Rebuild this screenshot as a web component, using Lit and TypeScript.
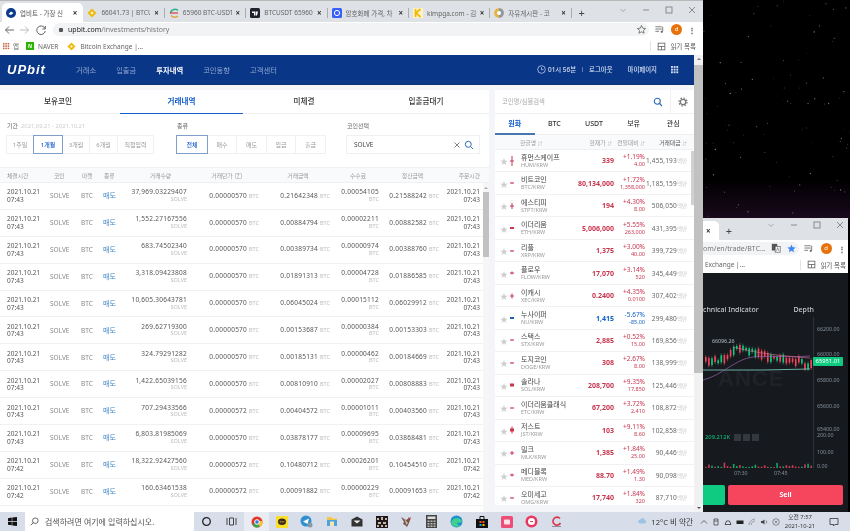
import { LitElement, css, html, svg } from 'lit';
import { customElement } from 'lit/decorators.js';

const TABS = [
  ['up', '업비트 - 가장 신'],
  ['bn', '66041.73 | BTCUS'],
  ['cc', '65960 BTC-USDT'],
  ['tv', 'BTCUSDT 65960.'],
  ['cm', '암호화폐 가격, 차'],
  ['km', 'kimpga.com - 김'],
  ['fr', '자유게시판 - 코'],
];

// amount, price, total, fee, settled, order time
const TRADES = [
  ['37,969.03229407', '0.00000570', '0.21642348', '0.00054105', '0.21588242', '07:43'],
  ['1,552.27167556', '0.00000570', '0.00884794', '0.00002211', '0.00882582', '07:43'],
  ['683.74502340', '0.00000570', '0.00389734', '0.00000974', '0.00388760', '07:43'],
  ['3,318.09423808', '0.00000570', '0.01891313', '0.00004728', '0.01886585', '07:43'],
  ['10,605.30643781', '0.00000570', '0.06045024', '0.00015112', '0.06029912', '07:43'],
  ['269.62719300', '0.00000570', '0.00153687', '0.00000384', '0.00153303', '07:43'],
  ['324.79291282', '0.00000570', '0.00185131', '0.00000462', '0.00184669', '07:43'],
  ['1,422.65039156', '0.00000570', '0.00810910', '0.00002027', '0.00808883', '07:43'],
  ['707.29433566', '0.00000572', '0.00404572', '0.00001011', '0.00403560', '07:43'],
  ['6,803.81985069', '0.00000570', '0.03878177', '0.00009695', '0.03868481', '07:43'],
  ['18,322.92427560', '0.00000572', '0.10480712', '0.00026201', '0.10454510', '07:42'],
  ['160.63461538', '0.00000572', '0.00091882', '0.00000229', '0.00091653', '07:42'],
];

// name, symbol, price, change, diff, volume, tail, body
const COINS: [string, string, string, string, string, string, number, number][] = [
  ['휴먼스케이프', 'HUM/KRW', '339', '+1.19%', '4.00', '1,455,193', 10, 1],
  ['비트코인', 'BTC/KRW', '80,134,000', '+1.72%', '1,358,000', '1,185,159', 1, 1],
  ['에스티피', 'STPT/KRW', '194', '+4.30%', '8.00', '506,050', 6, 1],
  ['이더리움', 'ETH/KRW', '5,006,000', '+5.55%', '263,000', '431,395', 2, 2],
  ['리플', 'XRP/KRW', '1,375', '+3.00%', '40.00', '399,729', 1, 1],
  ['플로우', 'FLOW/KRW', '17,070', '+3.14%', '520', '345,449', 3, 1],
  ['이캐시', 'XEC/KRW', '0.2400', '+4.35%', '0.0100', '307,402', 5, 1],
  ['누사이퍼', 'NU/KRW', '1,415', '-5.67%', '-85.00', '299,480', 2, 2],
  ['스택스', 'STX/KRW', '2,885', '+0.52%', '15.00', '169,856', 1, 1],
  ['도지코인', 'DOGE/KRW', '308', '+2.67%', '8.00', '138,999', 1, 1],
  ['솔라나', 'SOL/KRW', '208,700', '+9.35%', '17,850', '125,446', 2, 3],
  ['이더리움클래식', 'ETC/KRW', '67,200', '+3.72%', '2,410', '108,872', 1, 1],
  ['저스트', 'JST/KRW', '103', '+9.11%', '8.60', '102,858', 7, 3],
  ['밀크', 'MLK/KRW', '1,385', '+1.84%', '25.00', '90,446', 4, 1],
  ['메디블록', 'MED/KRW', '88.70', '+1.49%', '1.30', '90,098', 3, 1],
  ['오미세고', 'OMG/KRW', '17,740', '+1.84%', '320', '87,710', 1, 1],
];

function seeded(seed: number) {
  let s = seed;
  return () => {
    s = (s * 16807) % 2147483647;
    return s / 2147483647;
  };
}

const chromeGlyphs = {
  back: svg`<path d="M11 6H2.5M6 2.5 2.5 6 6 9.5" fill="none" stroke="currentColor" stroke-width="1"/>`,
  reload: svg`<path d="M10 4.5A4.3 4.3 0 1 0 10.3 7M10.3 2v3h-3" fill="none" stroke="currentColor" stroke-width="1"/>`,
  star: svg`<path d="M6 1.6 7.3 4.6l3.2.3-2.4 2.1.7 3.1L6 8.5l-2.8 1.6.7-3.1L1.5 4.9l3.2-.3Z" fill="none" stroke="currentColor" stroke-width=".9"/>`,
  starOn: svg`<path d="M6 1.6 7.3 4.6l3.2.3-2.4 2.1.7 3.1L6 8.5l-2.8 1.6.7-3.1L1.5 4.9l3.2-.3Z" fill="#4285f4"/>`,
  media: svg`<path d="M1.5 3h7M1.5 5.5h7M1.5 8h4" stroke="currentColor" stroke-width=".9" fill="none"/><path d="M9.5 3v5" stroke="currentColor" stroke-width=".9"/><circle cx="8.5" cy="8.5" r="1.2" fill="currentColor"/>`,
  reading: svg`<rect x="1.5" y="1.5" width="9" height="9" fill="none" stroke="currentColor"/><path d="M1.5 6h9M6 6v4.5" stroke="currentColor"/>`,
  translate: svg`<rect x="1" y="1" width="6.5" height="8" fill="#555"/><rect x="5" y="4" width="6" height="7" fill="#fff" stroke="#555" stroke-width=".8"/><path d="M6.5 9.5 8 5.5l1.500 4" fill="none" stroke="#555" stroke-width=".7"/>`,
};

function glyph(g: unknown, size = 12) {
  return html`<svg width=${size} height=${size} viewBox="0 0 12 12">${g}</svg>`;
}

function dotGrid(color: string, size: number) {
  const c = size / 3;
  return html`<svg width=${size} height=${size} viewBox="0 0 ${size} ${size}">
    ${[0, 1, 2].flatMap((x) =>
      [0, 1, 2].map(
        (y) =>
          svg`<rect x=${x * c} y=${y * c} width=${c - 0.8} height=${c - 0.8} fill=${color}/>`,
      ),
    )}
  </svg>`;
}

function favicon(kind: string) {
  switch (kind) {
    case 'up':
      return svg`<circle cx="5" cy="5" r="5" fill="#0b3a8c"/><path d="M2.5 6 5 3.5 7.5 5 5 7Z" fill="#fff"/>`;
    case 'bn':
      return svg`<path d="M5 .5 9.5 5 5 9.5.5 5Z" fill="#f0b90b"/><path d="M5 3.5 6.5 5 5 6.5 3.5 5Z" fill="#fff"/>`;
    case 'cc':
      return svg`<path d="M9 2.500C6 0 1.500 2 1.500 5.500" stroke="#2db38a" stroke-width="1.5" fill="none"/><path d="M1 5h8" stroke="#d94a4a" stroke-width="1.3"/><path d="M2 7.500c2 2 5 2 7 .5" stroke="#e0a03a" stroke-width="1.3" fill="none"/>`;
    case 'tv':
      return svg`<rect width="10" height="10" rx="1.5" fill="#1e222d"/><path d="M2 3.500h3.500v4H4V5H2ZM6 3.500h2l-1 4H6Z" fill="#fff"/>`;
    case 'cm':
      return svg`<rect width="10" height="10" rx="1.5" fill="#3861fb"/><circle cx="5" cy="5" r="2.6" fill="none" stroke="#fff"/>`;
    case 'km':
      return svg`<rect width="10" height="10" fill="#fff3c4"/><path d="M2.500 1v8M7.500 1 3 5l4.500 4" stroke="#f0b90b" stroke-width="1.8" fill="none"/>`;
    default:
      return svg`<circle cx="5" cy="5" r="4.8" fill="#e8b13a"/><path d="M5 .2A4.800 4.800 0 0 1 5 9.800Z" fill="#8c99a8"/><circle cx="5" cy="5" r="2" fill="#fff"/>`;
  }
}

function starfield() {
  const r = seeded(77);
  const dots = Array.from({ length: 90 }, () => {
    const x = 703 + r() * 147;
    const y = r() * 218;
    const o = 0.15 + r() * 0.45;
    return svg`<circle cx=${x} cy=${y} r=${0.35 + r() * 0.35} fill="#fff" opacity=${o}/>`;
  });
  return html`<svg class="stars" width="850" height="512">
    <defs>
      <linearGradient id="haze" x1="0" y1="0" x2="0" y2="1">
        <stop offset="0" stop-color="#000"/>
        <stop offset="1" stop-color="#1a0a1e"/>
      </linearGradient>
    </defs>
    <rect x="703" y="180" width="147" height="40" fill="url(#haze)"/>
    ${dots}
  </svg>`;
}

function candleChart() {
  const r = seeded(421);
  // y-centre path of the price across the visible part of the chart
  const knots = [
    [0, 22], [14, 21], [22, 20], [30, 12], [36, 8], [44, 12], [58, 15],
    [72, 19], [84, 23], [96, 22], [103, 27], [110, 22],
  ];
  const centre = (x: number) => {
    for (let i = 1; i < knots.length; i++) {
      if (x <= knots[i][0]) {
        const [x0, y0] = knots[i - 1];
        const [x1, y1] = knots[i];
        return y0 + ((x - x0) / (x1 - x0)) * (y1 - y0);
      }
    }
    return 24;
  };
  const candles = [];
  const vols = [];
  for (let x = 2; x < 108; x += 3.1) {
    const up = r() > 0.45;
    const h = 2 + r() * 7;
    const c = centre(x) + (r() - 0.5) * 4;
    const col = up ? '#0ecb81' : '#f6465d';
    candles.push(svg`
      <path d="M${x + 0.7} ${c - h / 2 - 2}V${c + h / 2 + 2}" stroke=${col} stroke-width=".5"/>
      <rect x=${x} y=${c - h / 2} width="1.6" height=${h} fill=${col}/>`);
    const v = 1 + r() * r() * 5;
    vols.push(svg`<rect x=${x} y=${129 - v} width="1.6" height=${v} fill=${col} opacity=".8"/>`);
  }
  return html`<svg class="candles" width="110" height="150" viewBox="0 0 110 150">
    ${candles}
    <path d="M0 31 60 31 107 30" stroke="#7fd6c8" stroke-width=".8" fill="none"/>
    <path d="M0 41C20 36 32 20 50 18S90 19 107 17" stroke="#9a5fb0" stroke-width=".7" fill="none"/>
    <path d="M30 8C45 12 65 16 107 19" stroke="#d86a8c" stroke-width=".6" fill="none"/>
    ${vols}
  </svg>`;
}

function taskIcon(i: number) {
  switch (i) {
    case 0:
      return html`<svg width="11" height="11" viewBox="0 0 11 11"><circle cx="5.5" cy="5.5" r="3.8" fill="none" stroke="#222" stroke-width="1.3"/></svg>`;
    case 1:
      return html`<svg width="11" height="11" viewBox="0 0 11 11"><path d="M1 2v7M10 2v7M3.500 2h4v7h-4Z" fill="none" stroke="#333" stroke-width=".9"/></svg>`;
    case 2:
      return html`<svg width="12" height="12" viewBox="0 0 12 12"><circle cx="6" cy="6" r="5.5" fill="#e0392b"/><path d="M6 6 1.300 8.800A5.500 5.500 0 0 0 8.800 10.700Z" fill="#2fa84f"/><path d="M6 6l2.800 4.700A5.500 5.500 0 0 0 11.400 5H6Z" fill="#f7c325"/><circle cx="6" cy="6" r="2.3" fill="#2f7de1" stroke="#fff"/></svg>`;
    case 3:
      return html`<svg width="12" height="12" viewBox="0 0 12 12"><rect width="12" height="12" fill="#f9df2b"/><ellipse cx="6" cy="5.8" rx="4" ry="3.3" fill="#3c2a1e"/><path d="M3.800 5.800h4.400" stroke="#f9df2b" stroke-dasharray="1 .8"/></svg>`;
    case 4:
      return html`<svg width="13" height="13" viewBox="0 0 13 13"><circle cx="6" cy="6" r="5.5" fill="#2f8fd0"/><path d="M3 6.500 9 3.500 7.500 9Z" fill="#fff"/><circle cx="10" cy="10" r="2.5" fill="#8a97a6"/></svg>`;
    case 5:
      return html`<svg width="12" height="11" viewBox="0 0 12 11"><path d="M1 1h4l1 1.500h5V4H1Z" fill="#f5c542"/><path d="M1 4h10v6H1Z" fill="#4aa3df"/><path d="M4 5.500h4V10H4Z" fill="#f5e6a8"/></svg>`;
    case 6:
      return html`<svg width="12" height="11" viewBox="0 0 12 11"><path d="M.5 3.500 6 .5l5.500 3v7H.5Z" fill="#333"/><path d="M2.500 4.500h7L6 7.500Z" fill="#eee"/></svg>`;
    case 7:
      return html`<svg width="12" height="12" viewBox="0 0 12 12"><rect width="12" height="12" fill="#1d1a1d"/><path d="M1 2h2v2H1ZM5 1h2v3H5ZM9 2h2v2H9ZM2 6h3v2H2ZM7 6h3v2H7ZM1 9h2v2H1ZM5 9h2v2H5ZM9 9h2v2H9Z" fill="#c9b5a2"/></svg>`;
    case 8:
      return html`<svg width="13" height="13" viewBox="0 0 13 13"><path d="M1 2 6 5l5-3-2 6-2 4-2-2-2-1 1-2Z" fill="#7a5148"/><path d="M4 3.500 8 8 6.500 10Z" fill="#b9c7b0"/><path d="M8.500 2.500 10 5" stroke="#b33" /></svg>`;
    case 9:
      return html`<svg width="11" height="13" viewBox="0 0 11 13"><rect width="11" height="13" fill="#444"/><rect x="1.5" y="1.5" width="8" height="2.5" fill="#ddd"/><path d="M1.500 5.500h2v1.500h-2ZM4.500 5.500h2v1.500h-2ZM7.500 5.500h2v1.500h-2ZM1.500 8h2v1.500h-2ZM4.500 8h2v1.500h-2ZM7.500 8h2v1.500h-2ZM1.500 10.500h2v1.500h-2ZM4.500 10.500h2v1.500h-2ZM7.500 10.500h2v1.500h-2Z" fill="#bbb"/></svg>`;
    case 10:
      return html`<svg width="13" height="13" viewBox="0 0 13 13"><circle cx="6.5" cy="6.5" r="6" fill="#1b8fd3"/><path d="M1 8c1-5 8-7 11-2 0 2-3 2-5 1.500 0 2 2 3.500 4 2.700-2 2.500-8 2.500-10-2.200Z" fill="#3ed08c"/></svg>`;
    case 11:
      return html`<svg width="12" height="13" viewBox="0 0 12 13"><path d="M0 4h12v9H0Z" fill="#111"/><path d="M4 4V1.500h4V4" fill="none" stroke="#111"/><path d="M3.500 6h2v2h-2ZM6.500 6h2v2h-2Z" fill="#f25022"/><path d="M3.500 9h2v2h-2Z" fill="#00a4ef"/><path d="M6.500 9h2v2h-2Z" fill="#ffb900"/></svg>`;
    case 12:
      return html`<svg width="12" height="12" viewBox="0 0 12 12"><rect width="12" height="12" rx="1.5" fill="#ee4d77"/><rect x="3" y="3.5" width="6" height="5" rx="1" fill="#ffe3ea"/></svg>`;
    case 13:
      return html`<svg width="13" height="13" viewBox="0 0 13 13"><circle cx="6.5" cy="6.5" r="6" fill="#e8365d"/><circle cx="6.5" cy="6.5" r="3.5" fill="#fff"/><path d="M5 6.500h3" stroke="#e8365d"/></svg>`;
    default:
      return html`<svg width="13" height="13" viewBox="0 0 13 13"><path d="M10 3.500A4 4 0 1 0 10.500 8" fill="none" stroke="#d8344b" stroke-width="1.6"/><path d="M2 11.500h9" stroke="#8a8f99"/></svg>`;
  }
}

@customElement('app-root')
export class AppRoot extends LitElement {
  static override styles = css`
    :host {
      display: block;
      width: 850px;
      height: 531px;
      overflow: hidden;
      background: #000;
      color: #333;
      font-family: 'Noto Sans', 'Noto Sans CJK KR', sans-serif;
      font-size: 7px;
      filter: blur(0.3px);
    }
    * {
      box-sizing: border-box;
    }
    svg {
      display: block;
      flex: none;
    }
    .desktop {
      position: relative;
      height: 512px;
      overflow: hidden;
    }
    .stars {
      position: absolute;
      left: 0;
      top: 0;
    }
    /* desktop windows */
    .win-main {
      position: absolute;
      left: 0;
      top: 0;
      width: 703px;
      height: 512px;
      display: flex;
      flex-direction: column;
      background: #fff;
    }
    .win-chart {
      position: absolute;
      left: 703px;
      top: 218px;
      width: 145px;
      height: 294px;
      display: flex;
      flex-direction: column;
      background: #161a1e;
    }
    /* browser chrome */
    .tabbar {
      height: 22px;
      flex: none;
      display: flex;
      align-items: flex-end;
      padding: 2px 0 0 2px;
      background: #dee1e6;
      border-top: 1px solid #b9b9b9;
    }
    .tab {
      width: 81.4px;
      height: 19px;
      flex: none;
      display: flex;
      align-items: center;
      gap: 4px;
      padding: 0 6px 0 4px;
      color: #666;
      font-size: 6.5px;
      position: relative;
    }
    .tab.active {
      background: #fff;
      border-radius: 5px 5px 0 0;
      color: #555;
    }
    .tab:not(.active)::after {
      content: '';
      position: absolute;
      right: 0;
      top: 5px;
      height: 10px;
      width: 1px;
      background: #a9acb0;
    }
    .tab-title {
      flex: 1;
      min-width: 0;
      white-space: nowrap;
      overflow: hidden;
    }
    .tab-x {
      flex: none;
      font-size: 8px;
      line-height: 1;
      color: #333;
      font-weight: 700;
    }
    .newtab {
      width: 20px;
      height: 18px;
      text-align: center;
      font-size: 11px;
      line-height: 18px;
      color: #444;
      flex: none;
    }
    .winbtns {
      margin-left: auto;
      align-self: flex-start;
      display: flex;
      align-items: center;
      height: 14px;
      color: #777;
    }
    .win-chart .winbtns {
      margin-right: -3px;
    }
    .winbtns span {
      width: 23px;
      display: flex;
      justify-content: center;
    }
    .toolbar {
      height: 15px;
      flex: none;
      display: flex;
      align-items: center;
      background: #fff;
      padding: 0 5px 0 1px;
      color: #666;
    }
    .tool {
      width: 16px;
      display: flex;
      justify-content: center;
      flex: none;
      color: #666;
    }
    .tool.off {
      color: #bbb;
    }
    .flip {
      transform: scaleX(-1);
    }
    .addr {
      flex: 1;
      height: 13px;
      margin: 0 2px 0 4px;
      border-radius: 7px;
      background: #f1f3f4;
      display: flex;
      align-items: center;
      padding: 0 0 0 6px;
      gap: 5px;
      font-size: 7px;
      color: #777;
      white-space: nowrap;
    }
    .addr b {
      font-weight: 400;
      color: #222;
    }
    .lock {
      width: 4px;
      height: 4px;
      background: #555;
      border-radius: 1px;
      flex: none;
    }
    .addr .tool:last-child {
      margin-left: auto;
    }
    .avatar {
      width: 11px;
      height: 11px;
      border-radius: 50%;
      background: #e8710a;
      color: #fff;
      font-size: 6px;
      line-height: 11px;
      text-align: center;
      margin: 0 4px;
      flex: none;
    }
    .kebab {
      width: 12px;
      text-align: center;
      color: #555;
      font-size: 8px;
      font-weight: 700;
      flex: none;
    }
    .bookmarks {
      height: 18px;
      flex: none;
      display: flex;
      align-items: center;
      padding: 0 7px 0 3px;
      background: #fff;
      font-size: 6.5px;
      color: #666;
      white-space: nowrap;
    }
    .bm-apps {
      margin-right: 7px;
      display: flex;
      gap: 3px;
      align-items: center;
    }
    .bm {
      display: flex;
      gap: 4px;
      align-items: center;
      margin-right: 9px;
    }
    .naver {
      width: 8px;
      height: 8px;
      background: #2db400;
      color: #fff;
      font-size: 5px;
      line-height: 8px;
      text-align: center;
      font-weight: 700;
    }
    .reading {
      margin-left: auto;
      display: flex;
      align-items: center;
      gap: 4px;
      padding-left: 6px;
      border-left: 1px solid #e4e4e4;
      color: #555;
    }
    /* page */
    .viewport {
      flex: 1;
      min-height: 0;
      display: flex;
    }
    .page {
      width: 694px;
      display: flex;
      flex-direction: column;
      background: #f4f5f8;
    }
    .pagebar {
      width: 9px;
      background: #f1f1f1;
      position: relative;
      display: flex;
      flex-direction: column;
      align-items: center;
      padding-top: 10px;
    }
    .pagebar .thumb {
      width: 100%;
      height: 308px;
      background: #c1c1c1;
    }
    .pagebar i {
      position: absolute;
      left: 3px;
      border: 2px solid transparent;
    }
    .pagebar .up {
      top: 1px;
      border-bottom-color: #777;
    }
    .pagebar .down {
      bottom: 1px;
      border-top-color: #505050;
    }
    .nav {
      height: 30px;
      flex: none;
      background: #093687;
      border-bottom: 1px solid #0a2f72;
      display: flex;
      align-items: center;
      padding: 0 15px 0 7px;
      color: #8fa6cf;
      font-size: 7.3px;
      white-space: nowrap;
    }
    .logo {
      width: 69px;
      color: #fff;
      font-family: 'Liberation Sans', sans-serif;
      font-size: 13px;
      font-weight: 700;
      font-style: italic;
      letter-spacing: 1px;
    }
    .nav-item {
      margin-right: 20px;
    }
    .nav-item.on {
      color: #fff;
      font-weight: 700;
    }
    .nav-right {
      margin-left: auto;
      display: flex;
      align-items: center;
      color: #d6e0f2;
      font-size: 6.4px;
      font-weight: 500;
    }
    .nav-right .clock {
      margin-right: 2px;
    }
    .nav-right .sep {
      width: 1px;
      height: 5px;
      background: #5d79ae;
      margin: 0 6px;
    }
    .nav-right .mypage {
      margin: 0 14px 0 15px;
    }
    .content {
      flex: 1;
      min-height: 0;
      display: flex;
      gap: 6px;
      padding-top: 5px;
    }
    .left {
      width: 489px;
      background: #fff;
      display: flex;
      flex-direction: column;
    }
    .main-tabs {
      display: grid;
      grid-template-columns: 120px 123px 122px 122px;
      height: 24px;
      flex: none;
      border-bottom: 1px solid #eef0f3;
    }
    .main-tabs div {
      text-align: center;
      line-height: 23px;
      font-size: 7.6px;
      font-weight: 500;
      color: #333;
    }
    .main-tabs div:first-child {
      padding-right: 4px;
    }
    .main-tabs .on {
      color: #115dcb;
      font-weight: 700;
      border-bottom: 1px solid #115dcb;
      height: 24px;
    }
    .filters {
      height: 53px;
      flex: none;
      display: flex;
      padding: 8px 9px 0 6px;
    }
    .filter-label {
      font-size: 6px;
      line-height: 8px;
      color: #666;
      margin-bottom: 5px;
      padding-left: 1px;
    }
    .filter-label span {
      color: #ccc;
      margin-left: 3px;
      font-size: 5.8px;
    }
    .seg {
      display: flex;
      height: 19px;
    }
    .seg div {
      display: flex;
      align-items: center;
      justify-content: center;
      font-size: 6px;
      color: #999;
      border: 1px solid #eef0f3;
      margin-left: -1px;
    }
    .seg div:first-child {
      margin-left: 0;
    }
    .seg .on {
      color: #115dcb;
      font-weight: 500;
      border-color: #7d9fc9;
      position: relative;
    }
    .period {
      width: 170px;
    }
    .kind {
      width: 170px;
    }
    .coin-pick {
      flex: 1;
    }
    .coin-input {
      height: 19px;
      border: 1px solid #eef0f3;
      display: flex;
      align-items: center;
      padding: 0 5px 0 7px;
      font-size: 6.5px;
      color: #444;
    }
    .coin-input svg:first-of-type {
      margin-left: auto;
      margin-right: 3px;
    }
    .table {
      flex: 1;
      min-height: 0;
      position: relative;
    }
    .thead,
    .trow {
      display: grid;
      grid-template-columns: 43px 31px 22px 24px 60px 72px 71px 49px 60px 41px;
      padding: 0 9px 0 7px;
      width: 489px;
    }
    .thead {
      height: 16px;
      align-items: center;
      background: #f9fafc;
      border-top: 1px solid #eef0f3;
      border-bottom: 1px solid #eef0f3;
      font-size: 5.8px;
      color: #999;
    }
    .thead .ctr {
      text-align: center;
      padding-left: 7px;
    }
    .thead .pl4 {
      padding-left: 4px;
    }
    .thead .pl1 {
      padding-left: 1px;
    }
    .thead .help {
      display: inline-block;
      margin-left: 2px;
      width: 7px;
      height: 6px;
      line-height: 5px;
      border: 1px solid #ccc;
      border-radius: 1px;
      text-align: center;
      font-size: 5px;
      font-style: normal;
    }
    .trow {
      height: 26.9px;
      align-items: center;
      border-bottom: 1px solid #f1f1f4;
      font-size: 6.5px;
      line-height: 7.5px;
      color: #555;
      white-space: nowrap;
    }
    .r {
      text-align: right;
    }
    .num {
      letter-spacing: 0.25px;
    }
    .unit {
      color: #bbb;
      font-size: 5.5px;
      letter-spacing: 0;
    }
    .sub {
      display: block;
      color: #bbb;
      font-size: 5.5px;
      letter-spacing: 0;
    }
    .soft {
      color: #888;
    }
    .sell {
      color: #3f87c5;
      font-size: 7px;
    }
    .tbar {
      position: absolute;
      right: 0;
      top: 16px;
      width: 6px;
      bottom: 0;
      background: #f6f6f6;
    }
    .tbar .thumb {
      margin-top: 9px;
      height: 65px;
      background: #c1c1c1;
    }
    .tbar i {
      position: absolute;
      top: 2px;
      left: 1px;
      border: 2px solid transparent;
      border-bottom-color: #aaa;
    }
    /* market panel */
    .market {
      width: 199px;
      height: 415px;
      background: #fff;
      display: flex;
      flex-direction: column;
      position: relative;
      overflow: hidden;
    }
    .msearch {
      height: 24px;
      flex: none;
      display: flex;
      align-items: center;
      padding: 0 6px 0 7px;
      border-bottom: 1px solid #eef0f3;
      color: #aaa;
      font-size: 6.3px;
    }
    .msearch svg:first-of-type {
      margin-left: auto;
      margin-right: 7px;
    }
    .msearch .div {
      width: 1px;
      height: 100%;
      background: #eef0f3;
      margin-right: 7px;
    }
    .mtabs {
      height: 21px;
      flex: none;
      display: grid;
      grid-template-columns: repeat(5, 39.6px);
      border-bottom: 1px solid #eef0f3;
    }
    .mtabs div {
      text-align: center;
      line-height: 20px;
      font-size: 7px;
      font-weight: 500;
      color: #333;
    }
    .mtabs .on {
      color: #115dcb;
      font-weight: 700;
      border-bottom: 2px solid #4a76ab;
      height: 21px;
    }
    .mhead,
    .mrow {
      display: grid;
      grid-template-columns: 26px 93px 31px 42px;
    }
    .mhead {
      height: 15px;
      flex: none;
      align-items: center;
      background: #f9fafc;
      border-bottom: 1px solid #eef0f3;
      font-size: 5.8px;
      color: #999;
    }
    .mhead .h1 {
      padding-left: 25px;
      grid-column: 1 / span 2;
      display: flex;
      justify-content: space-between;
      padding-right: 2px;
    }
    .mhead .h3 {
      text-align: right;
      white-space: nowrap;
    }
    .mhead b {
      font-weight: 400;
      color: #bbb;
      font-size: 5px;
    }
    .mhead .dark {
      color: #555;
    }
    .mrow {
      height: 22.47px;
      flex: none;
      align-items: center;
      border-bottom: 1px solid #f1f1f4;
      white-space: nowrap;
    }
    .mark {
      display: flex;
      align-items: center;
      padding-left: 5px;
      gap: 2px;
      color: #ccc;
      font-size: 8px;
    }
    .tick {
      width: 4px;
      height: 12px;
      position: relative;
      flex: none;
    }
    .tick i,
    .tick b {
      position: absolute;
      left: 50%;
      top: 50%;
      transform: translate(-50%, -50%);
      background: currentColor;
    }
    .tick i {
      width: 1px;
    }
    .tick b {
      width: 4px;
    }
    .mname {
      display: flex;
      justify-content: space-between;
      align-items: center;
      min-width: 0;
    }
    .mname .ko {
      display: block;
      font-size: 7px;
      line-height: 9px;
      color: #444;
    }
    .mname .sym {
      display: block;
      font-size: 5.5px;
      line-height: 7px;
      color: #999;
    }
    .price {
      font-size: 7px;
      font-weight: 700;
      text-align: right;
    }
    .rise {
      color: #c8364e;
    }
    .fall {
      color: #1261c4;
    }
    .change {
      text-align: right;
      font-size: 6.5px;
      line-height: 8px;
    }
    .change span {
      display: block;
      font-size: 5.5px;
      line-height: 7px;
    }
    .vol {
      text-align: right;
      font-size: 6.5px;
      color: #666;
      letter-spacing: 0.15px;
      margin-left: -6px;
    }
    .vol span {
      color: #ccc;
      font-size: 5.5px;
      letter-spacing: 0;
    }
    .mbar {
      position: absolute;
      right: 0;
      top: 61px;
      width: 3px;
      height: 54px;
      background: #d0d0d0;
    }
    /* chart window */
    .win-chart .tabbar {
      padding: 0;
      border-top: 0;
    }
    .win-chart .tab {
      width: 16px;
      background: #fff;
      padding: 0 0 0 3px;
      border-radius: 0 5px 0 0;
    }
    .win-chart .tab::after {
      display: none;
    }
    .win-chart .addr {
      margin-left: 0;
      padding-left: 0;
      border-radius: 0 7px 7px 0;
      justify-content: space-between;
      padding-right: 2px;
    }
    .chart-tools {
      display: flex;
      gap: 5px;
    }
    .win-chart .toolbar {
      height: 16px;
      padding: 0 2px 0 0;
    }
    .win-chart .bookmarks {
      height: 17px;
      padding: 0 2px 0 2px;
    }
    .trade {
      flex: 1;
      min-height: 0;
      position: relative;
      color: #d8dade;
    }
    .trade-tabs {
      display: flex;
      justify-content: space-between;
      padding: 32px 34px 0 0;
      font-size: 7px;
      font-weight: 500;
      color: #c7c9cd;
      white-space: nowrap;
    }
    .candles {
      position: absolute;
      left: 0;
      top: 66px;
    }
    .watermark {
      position: absolute;
      left: 15px;
      top: 93px;
      font-family: 'Liberation Sans', sans-serif;
      font-size: 22px;
      font-weight: 700;
      letter-spacing: 1px;
      color: #1f2328;
    }
    .axis {
      position: absolute;
      left: 110px;
      top: 44px;
      bottom: 44px;
      width: 1px;
      background: #2b3139;
    }
    .tick-label {
      position: absolute;
      left: 114px;
      font-size: 5.3px;
      line-height: 5px;
      color: #848e9c;
    }
    .time-a {
      left: 31px;
      top: 198px;
    }
    .time-b {
      left: 71px;
      top: 198px;
    }
    .badge {
      position: absolute;
      left: 110px;
      top: 84px;
      width: 30px;
      height: 9px;
      background: #0ecb81;
      color: #fff;
      font-size: 5.8px;
      line-height: 9px;
      text-align: center;
      border-radius: 1px;
    }
    .hi {
      position: absolute;
      left: 9px;
      top: 64px;
      font-size: 5.3px;
      color: #b7bdc6;
    }
    .volrow {
      position: absolute;
      left: 2px;
      top: 160px;
      display: flex;
      align-items: center;
      gap: 2px;
      font-size: 5.8px;
      color: #0ecb81;
    }
    .volrow i {
      width: 7px;
      height: 7px;
      background: #33383f;
    }
    .volrow i:first-of-type {
      margin-left: 2px;
    }
    .actions {
      position: absolute;
      left: 0;
      right: 5px;
      top: 212px;
      height: 20px;
      display: flex;
      gap: 3px;
    }
    .buy {
      width: 22px;
      background: #0ecb81;
      border-radius: 0 2px 2px 0;
    }
    .sellbtn {
      flex: 1;
      background: #f6465d;
      border-radius: 2px;
      color: #fff;
      font-size: 7px;
      font-weight: 700;
      line-height: 20px;
      text-align: center;
    }
    /* taskbar */
    .taskbar {
      height: 19px;
      background: #d8dee9;
      display: flex;
      align-items: stretch;
      font-size: 7px;
      color: #333;
    }
    .start {
      width: 25px;
      display: flex;
      align-items: center;
      justify-content: center;
    }
    .task-search {
      width: 169px;
      background: #fff;
      display: flex;
      align-items: center;
      gap: 6px;
      padding-left: 5px;
      font-size: 8px;
      color: #555;
      white-space: nowrap;
    }
    .slot {
      width: 25px;
      display: flex;
      align-items: center;
      justify-content: center;
    }
    .slot.on {
      background: #e9edf3;
    }
    .tray {
      margin-left: auto;
      display: flex;
      align-items: center;
      color: #333;
      white-space: nowrap;
    }
    .weather {
      display: flex;
      align-items: center;
      gap: 4px;
      margin-right: 7px;
      font-size: 7.6px;
    }
    .tray-icons {
      display: flex;
      gap: 4px;
      color: #444;
      margin-right: 3px;
    }
    .clock-t {
      width: 34px;
      text-align: center;
      font-size: 5.8px;
      line-height: 9px;
    }
    .notify {
      width: 33px;
      display: flex;
      justify-content: center;
    }
  `;

  private renderTabs() {
    return html`<div class="tabbar">
      ${TABS.map(
        ([kind, title], i) => html`<div class="tab ${i === 0 ? 'active' : ''}">
          <svg width="10" height="10" viewBox="0 0 10 10">${favicon(kind)}</svg>
          <span class="tab-title">${title}</span>
          <span class="tab-x">×</span>
        </div>`,
      )}
      <div class="newtab">+</div>
      ${this.renderWinButtons()}
    </div>`;
  }

  private renderWinButtons() {
    return html`<div class="winbtns">
      <span
        ><svg width="8" height="8" viewBox="0 0 8 8"><path d="M1.500 3 4 5.500 6.500 3" fill="none" stroke="#999" stroke-width=".8"/></svg></span
      >
      <span
        ><svg width="8" height="8" viewBox="0 0 8 8"><path d="M1 4h6" stroke="#777" stroke-width=".8"/></svg></span
      >
      <span
        ><svg width="8" height="8" viewBox="0 0 8 8"><rect x="1" y="1" width="6" height="6" fill="none" stroke="#777" stroke-width=".8"/></svg></span
      >
      <span
        ><svg width="8" height="8" viewBox="0 0 8 8"><path d="M1 1l6 6M7 1 1 7" stroke="#777" stroke-width=".8"/></svg></span
      >
    </div>`;
  }

  private renderMain() {
    return html`<div class="win-main">
      ${this.renderTabs()}
      <div class="toolbar">
        <span class="tool">${glyph(chromeGlyphs.back)}</span>
        <span class="tool off flip">${glyph(chromeGlyphs.back)}</span>
        <span class="tool">${glyph(chromeGlyphs.reload)}</span>
        <div class="addr">
          <span class="lock"></span>
          <span><b>upbit.com</b>/investments/history</span>
          <span class="tool">${glyph(chromeGlyphs.star, 11)}</span>
        </div>
        <span class="tool">${glyph(chromeGlyphs.media, 11)}</span>
        <span class="avatar">d</span>
        <span class="kebab">⋮</span>
      </div>
      <div class="bookmarks">
        <span class="bm-apps">${dotGrid('#c9663b', 7)} 앱</span>
        <span class="bm"><span class="naver">N</span> NAVER</span>
        <span class="bm">
          <svg width="9" height="9" viewBox="0 0 10 10">${favicon('bn')}</svg>
          Bitcoin Exchange |...
        </span>
        <span class="reading">${glyph(chromeGlyphs.reading, 9)} 읽기 목록</span>
      </div>
      <div class="viewport">
        <div class="page">
          <div class="nav">
            <div class="logo">UPbit</div>
            <span class="nav-item">거래소</span>
            <span class="nav-item">입출금</span>
            <span class="nav-item on">투자내역</span>
            <span class="nav-item">코인동향</span>
            <span class="nav-item">고객센터</span>
            <div class="nav-right">
              <svg class="clock" width="9" height="9" viewBox="0 0 9 9"><circle cx="4.5" cy="4.5" r="3.8" fill="none" stroke="#d6e0f2" stroke-width=".7"/><path d="M4.500 2.300v2.300H6.500" fill="none" stroke="#d6e0f2" stroke-width=".7"/></svg>
              <span>01시 56분</span><span class="sep"></span><span>로그아웃</span>
              <span class="mypage">마이페이지</span>
              ${dotGrid('#d6e0f2', 8)}
            </div>
          </div>
          <div class="content">
            ${this.renderHistory()} ${this.renderMarket()}
          </div>
        </div>
        <div class="pagebar">
          <i class="up"></i>
          <div class="thumb"></div>
          <i class="down"></i>
        </div>
      </div>
    </div>`;
  }

  private renderHistory() {
    const seg = (items: [string, number][], on: string) =>
      html`<div class="seg">
        ${items.map(
          ([t, w]) =>
            html`<div class=${t === on ? 'on' : ''} style="width:${w}px">${t}</div>`,
        )}
      </div>`;
    return html`<section class="left">
      <div class="main-tabs">
        <div>보유코인</div>
        <div class="on">거래내역</div>
        <div>미체결</div>
        <div>입출금대기</div>
      </div>
      <div class="filters">
        <div class="period">
          <div class="filter-label">기간<span>2021.09.21 - 2021.10.21</span></div>
          ${seg(
            [
              ['1주일', 28],
              ['1개월', 30],
              ['3개월', 28],
              ['6개월', 29],
              ['직접입력', 37],
            ],
            '1개월',
          )}
        </div>
        <div class="kind">
          <div class="filter-label">종류</div>
          ${seg(
            [
              ['전체', 32],
              ['매수', 30],
              ['매도', 31],
              ['입금', 30],
              ['출금', 31],
            ],
            '전체',
          )}
        </div>
        <div class="coin-pick">
          <div class="filter-label">코인선택</div>
          <div class="coin-input">
            SOLVE
            <svg width="8" height="8" viewBox="0 0 8 8"><path d="M1.500 1.500l5 5M6.500 1.500l-5 5" stroke="#777" stroke-width=".9"/></svg>
            <svg width="10" height="10" viewBox="0 0 10 10"><circle cx="4.3" cy="4.3" r="3" fill="none" stroke="#2e6cb8" stroke-width="1"/><path d="M6.500 6.500 9 9" stroke="#2e6cb8" stroke-width="1"/></svg>
          </div>
        </div>
      </div>
      <div class="table">
        <div class="thead">
          <span>체결시간</span>
          <span class="pl4">코인</span>
          <span class="pl1">마켓</span>
          <span class="pl1">종류</span>
          <span class="ctr">거래수량</span>
          <span class="ctr">거래단가<i class="help">?</i></span>
          <span class="ctr">거래금액</span>
          <span class="ctr">수수료</span>
          <span class="ctr">정산금액</span>
          <span class="r">주문시간</span>
        </div>
        ${TRADES.map(
          ([amount, price, total, fee, settled, time]) => html`<div class="trow">
            <span>2021.10.21<br />${time}</span>
            <span class="soft">SOLVE</span>
            <span class="soft">BTC</span>
            <span class="sell">매도</span>
            <span class="r num">${amount}<span class="sub">SOLVE</span></span>
            <span class="r num">${price} <span class="unit">BTC</span></span>
            <span class="r num">${total} <span class="unit">BTC</span></span>
            <span class="r num">${fee}<span class="sub">BTC</span></span>
            <span class="r num">${settled} <span class="unit">BTC</span></span>
            <span class="r">2021.10.21<br />${time}</span>
          </div>`,
        )}
        <div class="tbar"><i></i><div class="thumb"></div></div>
      </div>
    </section>`;
  }

  private renderMarket() {
    return html`<section class="market">
      <div class="msearch">
        코인명/심볼검색
        <svg width="10" height="10" viewBox="0 0 10 10"><circle cx="4.3" cy="4.3" r="3" fill="none" stroke="#2e6cb8" stroke-width="1.1"/><path d="M6.500 6.500 9 9" stroke="#2e6cb8" stroke-width="1.1"/></svg>
        <span class="div"></span>
        <svg width="10" height="10" viewBox="0 0 10 10"><circle cx="5" cy="5" r="2.7" fill="none" stroke="#777" stroke-width="1.3"/><circle cx="5" cy="5" r="4" fill="none" stroke="#777" stroke-width="1.2" stroke-dasharray="1.5 1.64"/></svg>
      </div>
      <div class="mtabs">
        <div class="on">원화</div>
        <div>BTC</div>
        <div>USDT</div>
        <div>보유</div>
        <div>관심</div>
      </div>
      <div class="mhead">
        <span class="h1"><span>한글명 <b>⇵</b></span><span>현재가 <b>⇵</b></span></span>
        <span class="h3">전일대비 <b>⇵</b></span>
        <span class="h3 dark">거래대금 <b>⇵</b></span>
      </div>
      ${COINS.map(([name, sym, price, pct, diff, vol, tail, body]) => {
        const tone = pct.startsWith('-') ? 'fall' : 'rise';
        return html`<div class="mrow">
          <div class="mark">
            <span>★</span>
            <span class="tick ${tone}">
              <i style="height:${tail}px"></i>
              <b style="height:${body}px"></b>
            </span>
          </div>
          <div class="mname">
            <span><span class="ko">${name}</span><span class="sym">${sym}</span></span>
            <span class="price ${tone}">${price}</span>
          </div>
          <div class="change ${tone}">${pct}<span>${diff}</span></div>
          <div class="vol">${vol}<span>백만</span></div>
        </div>`;
      })}
      <div class="mbar"></div>
    </section>`;
  }

  private renderChartWindow() {
    const labels: [string, number][] = [
      ['66200.00', 54],
      ['66000.00', 79],
      ['65800.00', 105],
      ['65600.00', 131],
      ['65400.00', 154],
      ['200.00', 160],
      ['100.00', 177],
      ['0.00', 191],
    ];
    return html`<div class="win-chart">
      <div class="tabbar">
        <div class="tab"><span class="tab-x">×</span></div>
        <div class="newtab">+</div>
        ${this.renderWinButtons()}
      </div>
      <div class="toolbar">
        <div class="addr">
          <span>om/en/trade/BTC...</span>
          <span class="chart-tools">
            ${glyph(chromeGlyphs.translate, 10)} ${glyph(chromeGlyphs.starOn, 11)}
          </span>
        </div>
        <span class="tool">${glyph(chromeGlyphs.media, 11)}</span>
        <span class="avatar">d</span>
        <span class="kebab">⋮</span>
      </div>
      <div class="bookmarks">
        Exchange |...
        <span class="reading">${glyph(chromeGlyphs.reading, 9)} 읽기 목록</span>
      </div>
      <div class="trade">
        <div class="trade-tabs"><span>chnical Indicator</span><span>Depth</span></div>
        <div class="axis"></div>
        <div class="watermark">ANCE</div>
        ${candleChart()}
        <div class="hi">66096.26</div>
        ${labels.map(
          ([t, y]) => html`<div class="tick-label" style="top:${y}px">${t}</div>`,
        )}
        <div class="badge">65951.01</div>
        <div class="tick-label time-a">07:30</div>
        <div class="tick-label time-b">07:45</div>
        <div class="volrow">209.212K<i></i><i></i><i></i></div>
        <div class="actions">
          <div class="buy"></div>
          <div class="sellbtn">Sell</div>
        </div>
      </div>
    </div>`;
  }

  private renderTaskbar() {
    return html`<div class="taskbar">
      <div class="start">
        <svg width="9" height="9" viewBox="0 0 9 9"><path d="M0 1.200 3.800.6v3.500H0ZM4.300.5 9 0v4.100H4.300ZM0 4.700h3.800v3.600L0 7.800ZM4.300 4.700H9V9l-4.700-.6Z" fill="#111"/></svg>
      </div>
      <div class="task-search">
        <svg width="9" height="9" viewBox="0 0 9 9"><circle cx="5.3" cy="3.7" r="2.8" fill="none" stroke="#444" stroke-width=".8"/><path d="M3.300 5.700.8 8.300" stroke="#444" stroke-width=".8"/></svg>
        검색하려면 여기에 입력하십시오.
      </div>
      ${Array.from({ length: 15 }, (_, i) => html`<div class="slot ${i === 2 ? 'on' : ''}">${taskIcon(i)}</div>`)}
      <div class="tray">
        <div class="weather">
          <svg width="9" height="9" viewBox="0 0 9 9"><path d="M2 6.500a2 2 0 0 1 .3-4 2.500 2.500 0 0 1 4.700.8 1.700 1.700 0 0 1 0 3.200Z" fill="#9cc4e4"/></svg>
          12°C 비 약간
        </div>
        <div class="tray-icons">
          <svg width="8" height="8" viewBox="0 0 8 8"><path d="M1 5.500 4 2.500l3 3" fill="none" stroke="#333" stroke-width=".7"/></svg>
          <svg width="8" height="8" viewBox="0 0 8 8"><path d="M2 1h4v6H2Z" fill="none" stroke="#333" stroke-width=".7"/><path d="M2 3h4" stroke="#333" stroke-width=".7"/></svg>
          <svg width="8" height="8" viewBox="0 0 8 8"><path d="M1 6.500h6L5.500 3h-3Z" fill="none" stroke="#333" stroke-width=".8"/></svg>
          <svg width="8" height="8" viewBox="0 0 8 8"><path d="M.5 2.500h7v3.500h-7Z" fill="#222"/></svg>
          <svg width="8" height="8" viewBox="0 0 8 8"><path d="M1 7C1 4 4 1 7 1M3 7c0-2 2-4 4-4" fill="none" stroke="#777" stroke-width=".7"/></svg>
          <svg width="8" height="8" viewBox="0 0 8 8"><path d="M1 3v2h1.500L4.500 6.500v-5L2.500 3Z" fill="#444"/><path d="M6 2.500c1 1 1 2 0 3" fill="none" stroke="#444" stroke-width=".6"/></svg>
          <svg width="8" height="8" viewBox="0 0 8 8"><circle cx="4" cy="4" r="3.3" fill="none" stroke="#555" stroke-width=".6"/><path d="M2.600 2.600l2.800 2.800M5.400 2.600 2.600 5.400" stroke="#555" stroke-width=".6"/></svg>
        </div>
        <div class="clock-t">오전 7:57<br />2021-10-21</div>
        <div class="notify">
          <svg width="10" height="10" viewBox="0 0 10 10"><path d="M1 1.500h8v6H5.800L4.500 9V7.500H1Z" fill="none" stroke="#333" stroke-width=".8"/></svg>
        </div>
      </div>
    </div>`;
  }

  override render() {
    return html`
      <div class="desktop">
        ${starfield()} ${this.renderMain()} ${this.renderChartWindow()}
      </div>
      ${this.renderTaskbar()}
    `;
  }
}

declare global {
  interface HTMLElementTagNameMap {
    'app-root': AppRoot;
  }
}
